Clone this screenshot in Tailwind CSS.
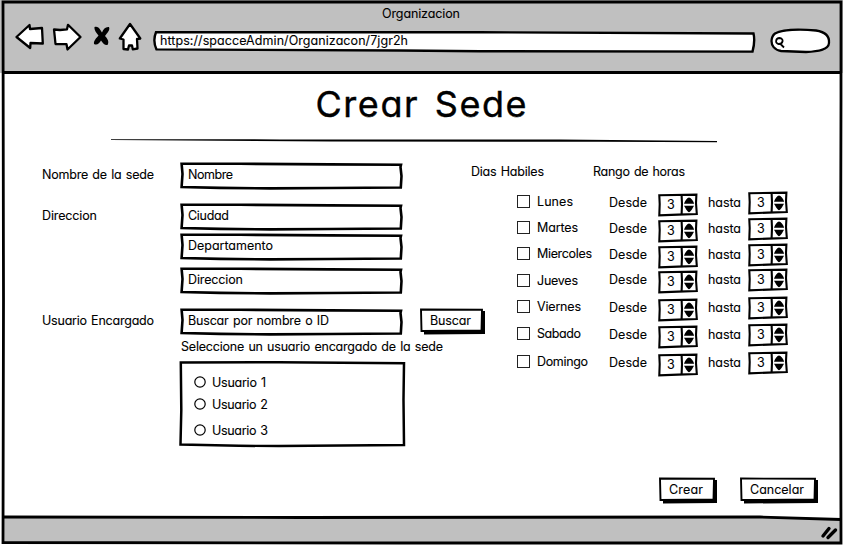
<!DOCTYPE html>
<html lang="es">
<head>
<meta charset="utf-8">
<title>Organizacion</title>
<script src="https://cdn.jsdelivr.net/npm/@tailwindcss/browser@4"></script>
</head>
<body class="bg-white">
<svg class="hidden">
  <symbol id="field" viewBox="0 0 223 28">
    <path d="M1.600 1.700 L60 1.800 L150 2.400 L221 2.800 L220.500 5 L221.500 14 L220.800 25.500 L150 26 L90 26.400 L40 25.900 L1.600 25 L2.500 12 Z" fill="#fff" stroke="#000" stroke-width="2.600"/>
  </symbol>
  <symbol id="stepper" viewBox="0 0 40 24">
    <path d="M1.300 2.300 L38.400 1.600 L38 10 L38.800 21 L20 21.600 L1.300 22.400 L1.700 11 Z" fill="#fff" stroke="#000" stroke-width="2.100"/>
    <path d="M23.600 2 L24 11 L23.600 21.500" stroke="#000" stroke-width="2.100" fill="none"/>
    <path d="M31 4.400 C32.600 4.500 35.500 7.500 36.200 10.800 L26 10.800 C27 7.500 29.400 4.500 31 4.400 Z M26 12.800 L36 12.800 C34.600 15.500 32.600 19 31 19.200 C29.600 19 27.600 15.500 26 12.800 Z"/>
  </symbol>
</svg>

<main class="relative flex h-[545px] w-[843px] flex-col overflow-hidden bg-white font-[Inter,'Liberation_Sans',sans-serif] text-[12.5px] leading-[18px] text-black [font-feature-settings:'cv11'] [word-spacing:1px] [-webkit-text-stroke:0.1px_black] whitespace-nowrap">
  <header class="flex h-[73px] flex-col bg-[#c0c0c0] pt-[5px]">
    <h1 class="mx-auto h-4 w-[79px]"><span data-w="78">Organizacion</span></h1>
    <div class="flex pl-[14px]">
      <svg class="h-[32px] w-[132px]" viewBox="14 21 132 32" fill="#fff" stroke="#000" stroke-width="2.300" stroke-linejoin="round">
        <path d="M16.500 37 L29.500 25 L30 29 L42 28 L42.800 43.500 L30.500 43 L30.200 48 Z"/>
        <path d="M54 29.500 L60 30 L67 29.300 L68 24.800 L80.500 37 L67.500 49.500 L66.500 44.200 L55.500 44 L54.800 37 Z"/>
        <path d="M94.500 27 C98 25.500 100 29 102 32.500 C103.500 29 105.500 26.500 109 27 C110.500 30 107 33 105 36 C107.500 38.500 109.500 42 107.500 45 C104.500 45.500 103 43 101 40.500 C99.500 43.500 97 45.500 94 44 C93.500 40.500 96.500 38 98.500 35.500 C96.500 33 94 30 94.500 27 Z" fill="#000" stroke="none"/>
        <path d="M130 24 L140.300 38.500 L137 39 L137.500 48.500 L132.800 49.300 L132 45.500 L129 45.500 L128 49.500 L123.500 49 L123.500 39.500 L119.800 38.500 Z"/>
      </svg>
      <div class="relative mt-[10px] ml-[7px] h-[22px] w-[604px]">
        <svg class="absolute inset-0 h-[22px] w-[604px]" viewBox="153 31 604 22"><path d="M156 32.200 L480 32.200 L753.500 33.500 C754.800 39 754 46 752.500 51.600 L480 51.200 L400 50.500 L156.500 49.400 C154 44 154 37 156 32.200 Z" fill="#fff" stroke="#000" stroke-width="2.400"/></svg>
        <div class="relative ml-[7px] pt-px"><span data-w="248">https://spacceAdmin/Organizacon/7jgr2h</span></div>
      </div>
      <svg class="mt-[5px] ml-[12px] h-[28px] w-[64px]" viewBox="769 26 64 28" fill="none" stroke="#000" stroke-width="2.300">
        <path d="M775 33.500 C782 29.500 800 29 816 30.500 C826 32 829.500 37 829 43 C828.500 50 818 51.500 806 52 L781 51 C774 50 771.500 45 771.500 41 C771.700 37.500 773 35 775 33.500 Z" fill="#fff"/>
        <path d="M779.500 38 C775.500 38 774.800 43.500 778.500 44 C783 44.300 784.500 38.500 779.500 38 Z M780.500 44 L784 47.500" stroke-width="1.800"/>
      </svg>
    </div>
  </header>

  <section class="flex h-[77px] flex-col items-center">
    <h2 class="mt-[9px] h-[44px] w-[212px] text-[36px] leading-[44px] [word-spacing:4px] [-webkit-text-stroke:0.4px_black]"><span data-w="211">Crear Sede</span></h2>
    <svg class="mt-[12px] mr-[15px] h-[6px] w-[608px]" viewBox="110 138 608 6"><path d="M111 139.200 L280 139.400 L560 139.600 L717 141 L717 142.200 L600 141.800 L330 141.500 L111 140 Z"/></svg>
  </section>

  <div class="flex h-[327px]">
    <section class="flex w-[471px] flex-col pl-[42px]">
      <div class="mt-[12px] flex h-[41px]">
        <label class="mt-[4px] w-[138px] shrink-0"><span data-w="112">Nombre de la sede</span></label>
        <div class="relative h-[28px] w-[223px]"><svg class="absolute inset-0 h-full w-full"><use href="#field"/></svg><div class="relative pt-[4px] pl-[8px]"><span data-w="45">Nombre</span></div></div>
      </div>
      <div class="flex h-[105px]">
        <label class="mt-[4px] w-[138px] shrink-0"><span data-w="55">Direccion</span></label>
        <div class="flex flex-col">
          <div class="relative h-[28px] w-[223px]"><svg class="absolute inset-0 h-full w-full"><use href="#field"/></svg><div class="relative pt-[4px] pl-[8px]"><span data-w="41">Ciudad</span></div></div>
          <div class="relative mt-[2px] h-[28px] w-[223px]"><svg class="absolute inset-0 h-full w-full"><use href="#field"/></svg><div class="relative pt-[4px] pl-[8px]"><span data-w="85">Departamento</span></div></div>
          <div class="relative mt-[6px] h-[28px] w-[223px]"><svg class="absolute inset-0 h-full w-full"><use href="#field"/></svg><div class="relative pt-[4px] pl-[8px]"><span data-w="55">Direccion</span></div></div>
        </div>
      </div>
      <div class="flex h-[30px]">
        <label class="mt-[4px] w-[138px] shrink-0"><span data-w="112">Usuario Encargado</span></label>
        <div class="relative h-[28px] w-[223px] shrink-0"><svg class="absolute inset-0 h-full w-full"><use href="#field"/></svg><div class="relative pt-[4px] pl-[8px]"><span data-w="141">Buscar por nombre o ID</span></div></div>
        <button class="relative ml-[17px] h-[27px] w-[66px] shrink-0 text-left">
          <svg class="absolute inset-0" width="66" height="27" viewBox="0 0 66 27"><path d="M4 3 H65 V26 L4 26.500 Z"/><path d="M1 1.500 L62 1.800 L61.500 22.500 L1.500 23 Z" fill="#fff" stroke="#000" stroke-width="1.900"/></svg>
          <span class="relative block pb-px pl-[10px]"><span data-w="41">Buscar</span></span>
        </button>
      </div>
      <p class="ml-[139px] h-[22px]"><span data-w="262">Seleccione un usuario encargado de la sede</span></p>
      <div class="relative ml-[137px] h-[88px] w-[227px]">
        <svg class="absolute inset-0" width="227" height="88" viewBox="0 0 227 88"><path d="M1.800 2.500 L100 2.300 L225 3.200 L224.500 40 L225 85 L100 86 L60 85.800 L1.500 84.500 L2.300 50 Z" fill="#fff" stroke="#000" stroke-width="2.500"/></svg>
        <div class="relative flex flex-col pt-[14px] pl-[15px]">
          <label class="flex h-[22px] gap-[6px]"><svg class="mt-[2px]" width="12" height="12"><circle cx="6" cy="6" r="5.200" fill="#fff" stroke="#000" stroke-width="1.200"/></svg><span><span data-w="54">Usuario 1</span></span></label>
          <label class="flex h-[26px] gap-[6px]"><svg class="mt-[2px]" width="12" height="12"><circle cx="6" cy="6" r="5.200" fill="#fff" stroke="#000" stroke-width="1.200"/></svg><span><span data-w="56">Usuario 2</span></span></label>
          <label class="flex h-[22px] gap-[6px]"><svg class="mt-[2px]" width="12" height="12"><circle cx="6" cy="6" r="5.200" fill="#fff" stroke="#000" stroke-width="1.200"/></svg><span><span data-w="56">Usuario 3</span></span></label>
        </div>
      </div>
    </section>

    <section class="flex flex-col pt-[13px]">
      <div class="flex h-[29px]">
        <h3 class="w-[122px]"><span data-w="73">Dias Habiles</span></h3>
        <h3><span data-w="92">Rango de horas</span></h3>
      </div>
      <div id="days" class="flex flex-col pl-[46px]"></div>
    </section>
  </div>

  <div class="flex h-[40px] gap-[22px] pl-[659px]">
    <button class="relative h-[27px] w-[59px] text-left">
      <svg class="absolute inset-0" width="59" height="27" viewBox="0 0 59 27"><path d="M4 3 H58 V26 L4 26.500 Z"/><path d="M1 1.500 L55 1.800 L54.500 22.500 L1.500 23 Z" fill="#fff" stroke="#000" stroke-width="1.900"/></svg>
      <span class="relative block pb-px pl-[10px]"><span data-w="34">Crear</span></span>
    </button>
    <button class="relative h-[27px] w-[79px] text-left">
      <svg class="absolute inset-0" width="79" height="27" viewBox="0 0 79 27"><path d="M4 3 H78 V26 L4 26.500 Z"/><path d="M1 1.500 L75 1.800 L74.500 22.500 L1.500 23 Z" fill="#fff" stroke="#000" stroke-width="1.900"/></svg>
      <span class="relative block pb-px pl-[10px]"><span data-w="54">Cancelar</span></span>
    </button>
  </div>

  <!-- Window frame, header rule and status bar -->
  <svg class="pointer-events-none absolute inset-0" width="843" height="545" viewBox="0 0 843 545" fill="none" stroke="#000">
    <path d="M3 517 L760 517 L841 519.500 V543 H3 Z" fill="#c0c0c0" stroke="none"/>
    <path d="M3 2 H841 V100 L840.500 300 L841 543 L400 543 L3 542.500 L3.500 300 Z" stroke-width="2.800"/>
    <path d="M3 72.500 H841" stroke-width="2.800"/>
    <path d="M3 517 L300 517.500 L760 517 L841 519.500" stroke-width="2.800"/>
    <path d="M823 536 L829 528.500 M828 537.500 L835.500 530" stroke-width="3.400" stroke-linecap="round"/>
  </svg>
</main>

<script>
const days = [
  ['Lunes', 36, 26], ['Martes', 41, 26], ['Miercoles', 55, 25], ['Jueves', 41, 28],
  ['Viernes', 44, 27], ['Sabado', 44, 28], ['Domingo', 51, 26]
];
document.getElementById('days').innerHTML = days.map(([name, w, h]) => `
  <div class="flex" style="height:${h}px">
    <label class="flex w-[92px] gap-[7px] ${name === 'Jueves' ? 'pt-[3px]' : 'pt-px'}">
      <svg class="mt-[2px]" width="13" height="13"><rect x=".5" y=".5" width="12" height="12" fill="#fff" stroke="#222"/></svg>
      <span><span data-w="${w}">${name}</span></span>
    </label>
    <span class="w-[49px] pt-[2px]"><span data-w="38">Desde</span></span>
    <div class="relative mt-[1px] h-[24px] w-[40px]"><svg class="absolute inset-0" width="40" height="24"><use href="#stepper"/></svg><span class="relative block pt-[3px] pl-[9px]">3</span></div>
    <span class="w-[50px] pt-[2px] pl-[10px]"><span data-w="33">hasta</span></span>
    <div class="relative -mt-px h-[24px] w-[40px]"><svg class="absolute inset-0" width="40" height="24"><use href="#stepper"/></svg><span class="relative block pt-[3px] pl-[9px]">3</span></div>
  </div>`).join('');

// Track each label out to its set width, once styles are in
const track = () => document.querySelectorAll('[data-w]').forEach(el => {
  el.style.letterSpacing = '0px';
  const natural = el.getBoundingClientRect().width;
  el.style.letterSpacing = ((+el.dataset.w - natural) / (el.textContent.length - 1)) + 'px';
});
window.addEventListener('load', () => document.fonts.ready.then(track));
new ResizeObserver(track).observe(document.querySelector('h2'));
</script>
</body>
</html>
